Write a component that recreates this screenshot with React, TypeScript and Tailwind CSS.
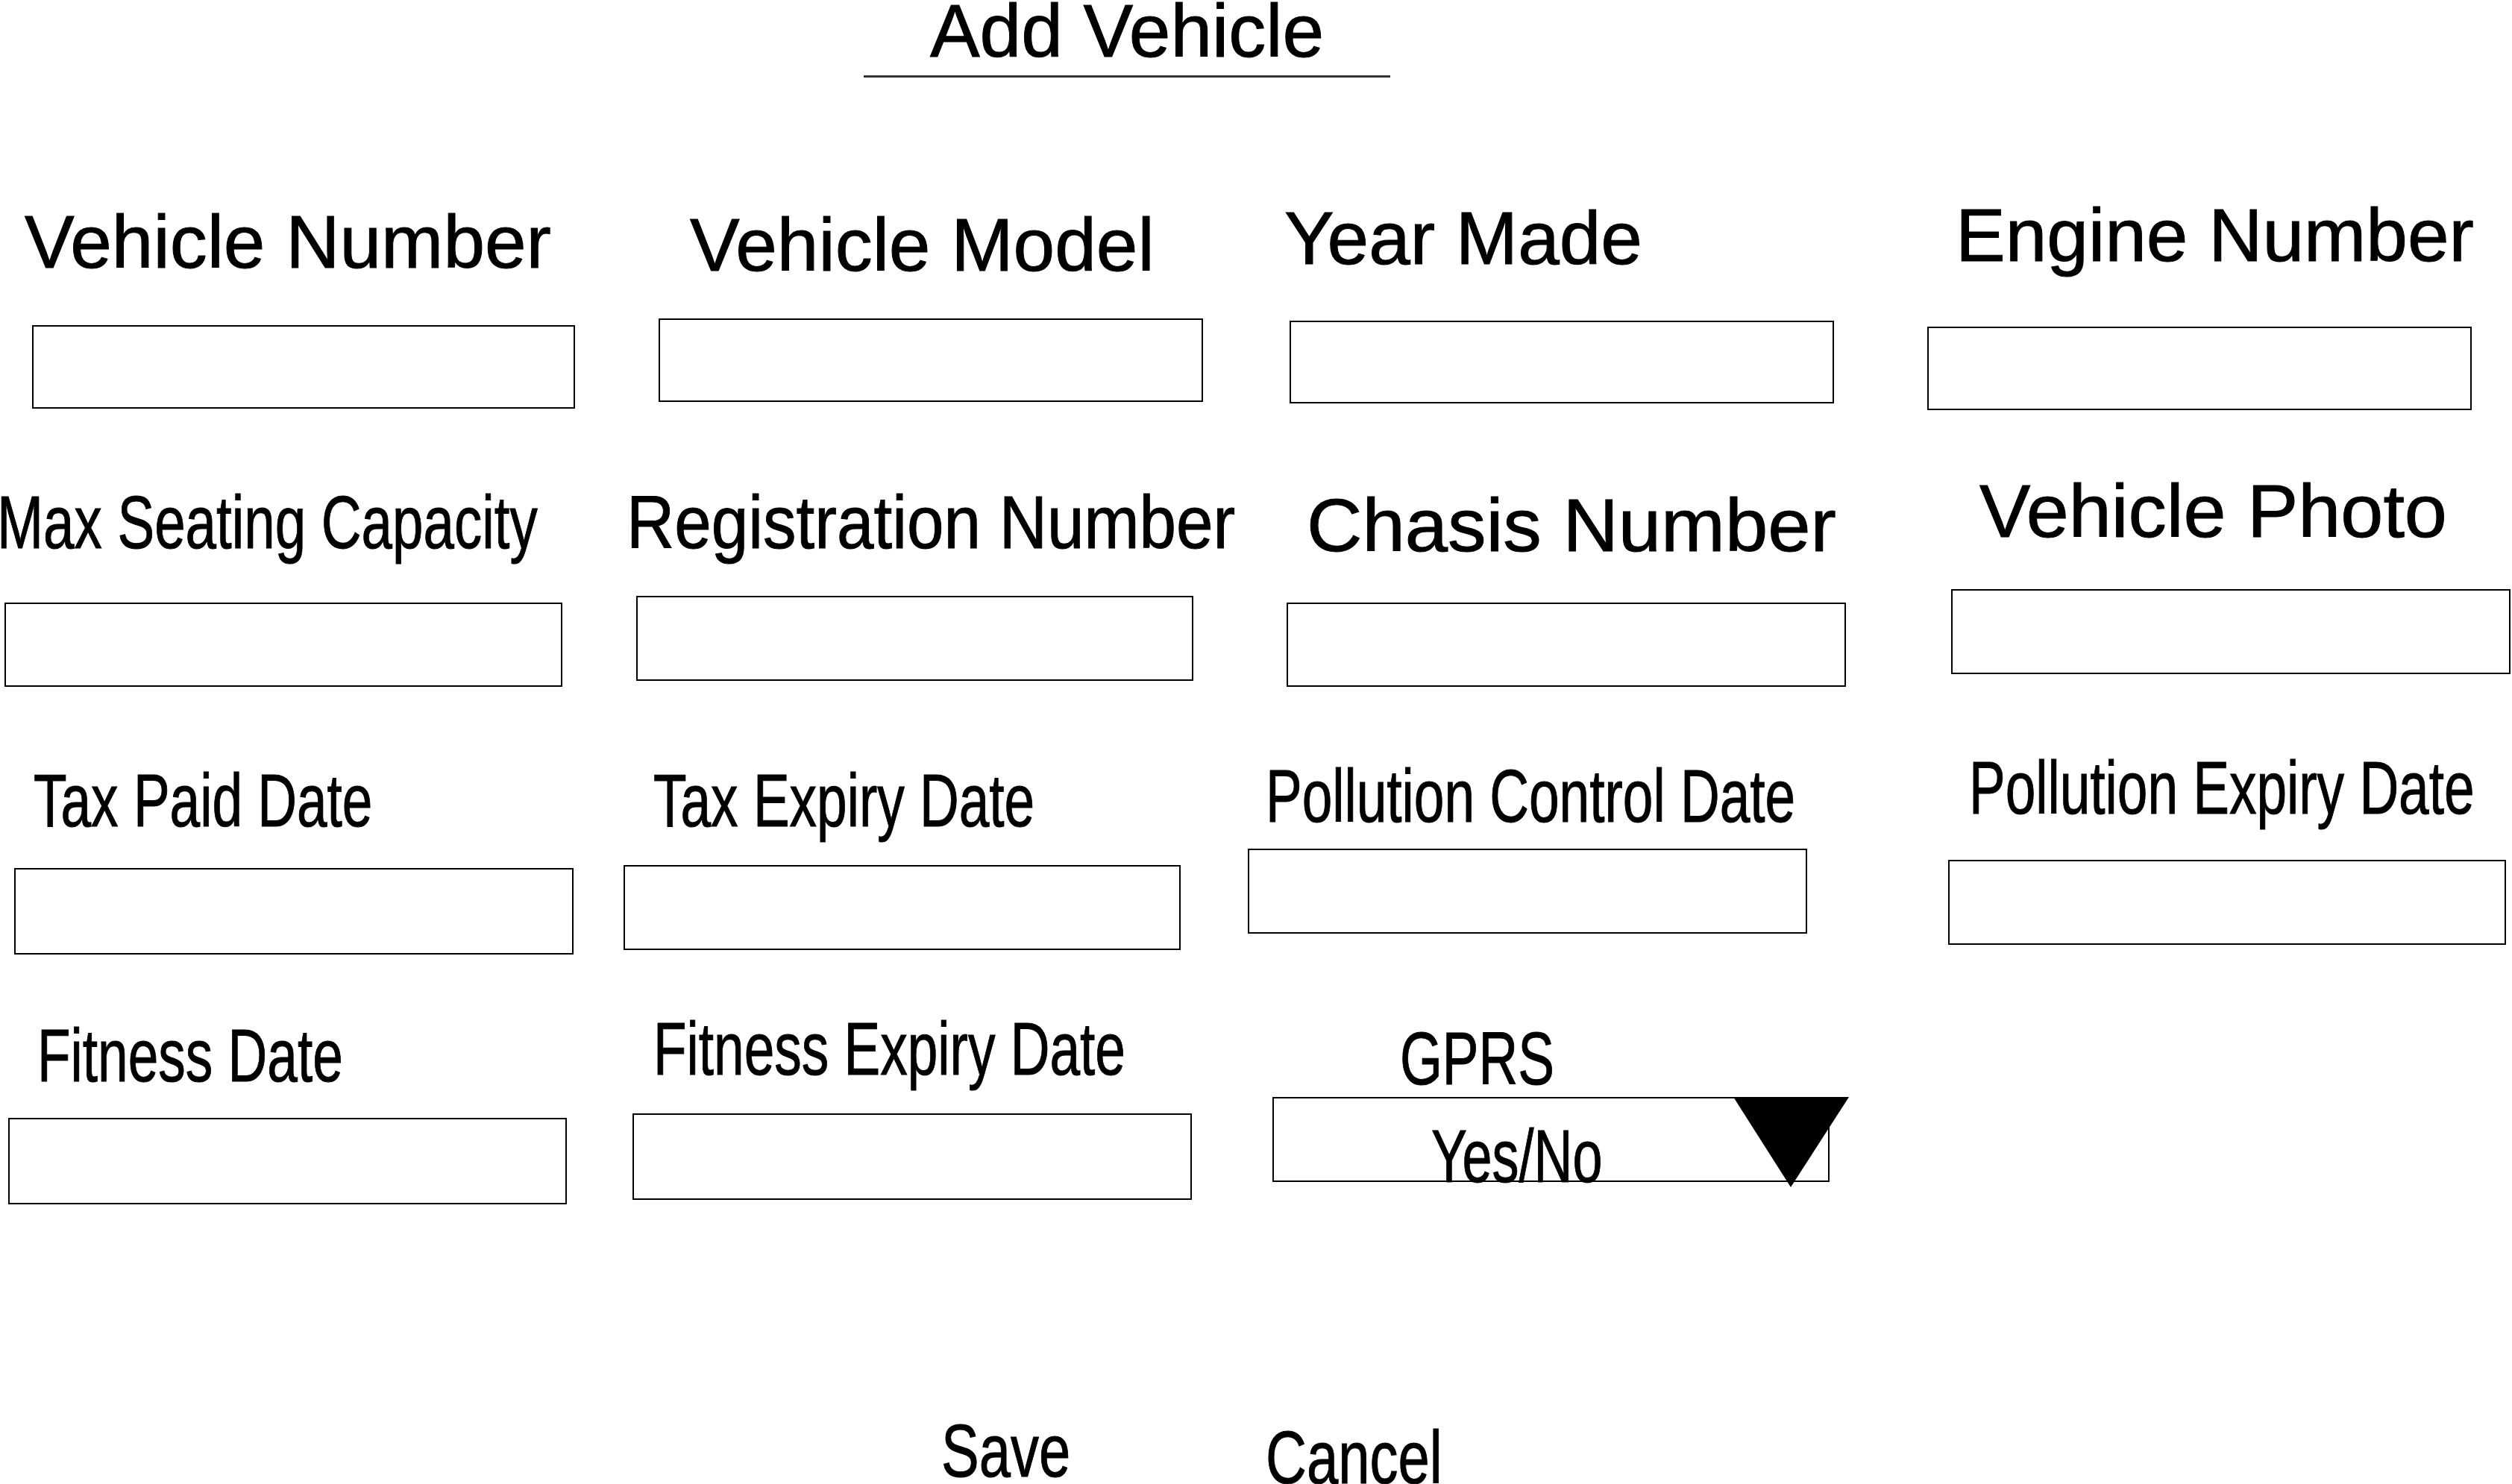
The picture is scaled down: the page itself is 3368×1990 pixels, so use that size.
const font = { fontFamily: '"Liberation Sans", Arial, sans-serif' };

function Label({ text, className }: { text: string; className: string }) {
  return (
    <div
      className={`whitespace-nowrap text-[100px] leading-none text-black origin-left [-webkit-text-stroke:1px_black] ${className}`}
    >
      {text}
    </div>
  );
}

function Box({ className }: { className: string }) {
  return <div className={`border-2 border-black bg-white ${className}`} />;
}

export default function App() {
  return (
    <div className="w-[3368px] h-[1990px] bg-white overflow-hidden flex flex-col" style={font}>
      {/* Title */}
      <div className="ml-[1158px] w-[706px] flex flex-col items-center shrink-0">
        <div className="mt-[-9px] text-[100px] leading-none whitespace-nowrap text-black [-webkit-text-stroke:1px_black]">
          Add Vehicle
        </div>
        <div className="mt-[10px] w-full h-[3px] bg-[#333]" />
      </div>

      {/* Row 1 */}
      <div className="mt-[160px] h-[370px] shrink-0 grid grid-cols-4 items-start">
        <div className="flex flex-col">
          <Label text="Vehicle Number" className="mt-[10px] ml-[33px]" />
          <Box className="ml-[43px] mt-[62px] w-[728px] h-[112px]" />
        </div>
        <div className="flex flex-col">
          <Label text="Vehicle Model" className="mt-[14px] ml-[83px]" />
          <Box className="ml-[41px] mt-[49px] w-[730px] h-[112px]" />
        </div>
        <div className="flex flex-col">
          <Label text="Year Made" className="mt-[5px] ml-[38px]" />
          <Box className="ml-[45px] mt-[61px] w-[730px] h-[111px]" />
        </div>
        <div className="flex flex-col">
          <Label text="Engine Number" className="mt-px ml-[96px]" />
          <Box className="ml-[58px] mt-[73px] w-[730px] h-[112px]" />
        </div>
      </div>

      {/* Row 2 */}
      <div className="h-[371px] shrink-0 grid grid-cols-4 items-start">
        <div className="flex flex-col">
          <Label text="Max Seating Capacity" className="mt-[16px] ml-[-4px] scale-x-[0.745]" />
          <Box className="ml-[6px] mt-[58px] w-[748px] h-[113px]" />
        </div>
        <div className="flex flex-col">
          <Label text="Registration Number" className="mt-[16px] ml-[-2px] scale-x-[0.89]" />
          <Box className="ml-[11px] mt-[49px] w-[747px] h-[114px]" />
        </div>
        <div className="flex flex-col">
          <Label text="Chasis Number" className="mt-[20px] ml-[68px] scale-x-[1.03]" />
          <Box className="ml-[41px] mt-[54px] w-[750px] h-[113px]" />
        </div>
        <div className="flex flex-col">
          <Label text="Vehicle Photo" className="mt-px ml-[128px] scale-x-[1.025]" />
          <Box className="ml-[90px] mt-[55px] w-[750px] h-[114px]" />
        </div>
      </div>

      {/* Row 3 */}
      <div className="h-[350px] shrink-0 grid grid-cols-4 items-start">
        <div className="flex flex-col">
          <Label text="Tax Paid Date" className="mt-[18px] ml-[45px] scale-x-[0.73]" />
          <Box className="ml-[19px] mt-[41px] w-[750px] h-[116px]" />
        </div>
        <div className="flex flex-col">
          <Label text="Tax Expiry Date" className="mt-[18px] ml-[34px] scale-x-[0.73]" />
          <Box className="ml-[-6px] mt-[37px] w-[747px] h-[114px]" />
        </div>
        <div className="flex flex-col">
          <Label text="Pollution Control Date" className="mt-[12px] ml-[13px] scale-x-[0.73]" />
          <Box className="ml-[-11px] mt-[21px] w-[750px] h-[114px]" />
        </div>
        <div className="flex flex-col">
          <Label text="Pollution Expiry Date" className="mt-px ml-[114px] scale-x-[0.73]" />
          <Box className="ml-[86px] mt-[47px] w-[748px] h-[114px]" />
        </div>
      </div>

      {/* Row 4 */}
      <div className="h-[539px] shrink-0 grid grid-cols-4 items-start">
        <div className="flex flex-col">
          <Label text="Fitness Date" className="mt-[10px] ml-[50px] scale-x-[0.73]" />
          <Box className="ml-[11px] mt-[34px] w-[749px] h-[116px]" />
        </div>
        <div className="flex flex-col">
          <Label text="Fitness Expiry Date" className="mt-px ml-[34px] scale-x-[0.73]" />
          <Box className="ml-[6px] mt-[37px] w-[750px] h-[116px]" />
        </div>
        <div className="flex flex-col">
          <Label text="GPRS" className="mt-[14px] ml-[193px] scale-x-[0.73]" />
          <div className="relative ml-[22px] mt-[2px] w-[747px] h-[114px] border-2 border-black bg-white">
            <Label text="Yes/No" className="mt-[27px] ml-[211px] scale-x-[0.72]" />
            <svg className="absolute left-[616px] top-[-2px]" width="155" height="121" viewBox="0 0 155 121">
              <polygon points="0,0 155,0 77,121" fill="#000" />
            </svg>
          </div>
        </div>
        <div />
      </div>

      {/* Actions */}
      <div className="flex items-start shrink-0">
        <button className="ml-[1262px] w-[435px] text-left bg-transparent p-0 mt-px">
          <Label text="Save" className="scale-x-[0.76]" />
        </button>
        <button className="mt-[10px] bg-transparent p-0">
          <Label text="Cancel" className="scale-x-[0.76]" />
        </button>
      </div>
    </div>
  );
}
